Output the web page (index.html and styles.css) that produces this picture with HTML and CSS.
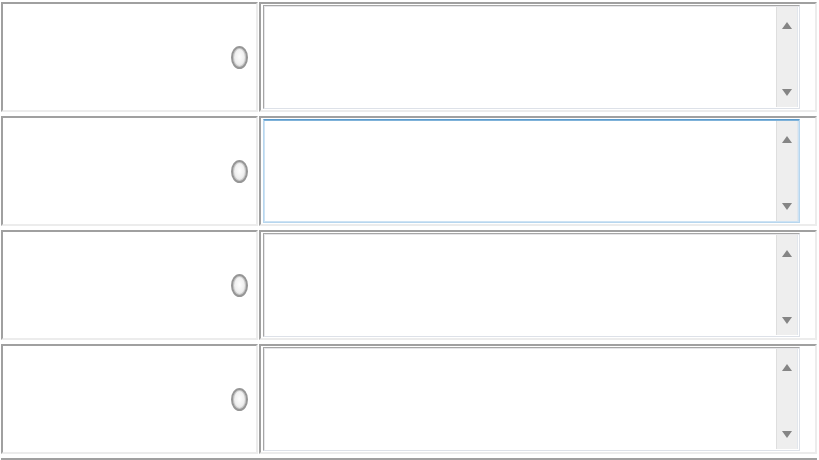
FILE: index.html
```html
<!DOCTYPE html>
<html lang="en">
<head>
    <meta charset="UTF-8">
    <meta name="viewport" content="width=device-width, initial-scale=1.0">
    <title>选项</title>
    <link rel="stylesheet" href="styles.css">
</head>
<body>
    <div class="list">
        <div class="row">
            <div class="cell cell-choice"><input type="radio" name="pick" class="pick"></div>
            <div class="cell cell-field">
                <div class="field">
                    <textarea class="text"></textarea>
                    <div class="scroll">
                        <svg class="arrow" width="10" height="7" viewBox="0 0 10 7"><polygon points="5,0 10,7 0,7"/></svg>
                        <svg class="arrow" width="10" height="7" viewBox="0 0 10 7"><polygon points="0,0 10,0 5,7"/></svg>
                    </div>
                </div>
            </div>
        </div>
        <div class="row">
            <div class="cell cell-choice"><input type="radio" name="pick" class="pick"></div>
            <div class="cell cell-field">
                <div class="field is-focus">
                    <textarea class="text"></textarea>
                    <div class="scroll">
                        <svg class="arrow" width="10" height="7" viewBox="0 0 10 7"><polygon points="5,0 10,7 0,7"/></svg>
                        <svg class="arrow" width="10" height="7" viewBox="0 0 10 7"><polygon points="0,0 10,0 5,7"/></svg>
                    </div>
                </div>
            </div>
        </div>
        <div class="row">
            <div class="cell cell-choice"><input type="radio" name="pick" class="pick"></div>
            <div class="cell cell-field">
                <div class="field">
                    <textarea class="text"></textarea>
                    <div class="scroll">
                        <svg class="arrow" width="10" height="7" viewBox="0 0 10 7"><polygon points="5,0 10,7 0,7"/></svg>
                        <svg class="arrow" width="10" height="7" viewBox="0 0 10 7"><polygon points="0,0 10,0 5,7"/></svg>
                    </div>
                </div>
            </div>
        </div>
        <div class="row">
            <div class="cell cell-choice"><input type="radio" name="pick" class="pick"></div>
            <div class="cell cell-field">
                <div class="field">
                    <textarea class="text"></textarea>
                    <div class="scroll">
                        <svg class="arrow" width="10" height="7" viewBox="0 0 10 7"><polygon points="5,0 10,7 0,7"/></svg>
                        <svg class="arrow" width="10" height="7" viewBox="0 0 10 7"><polygon points="0,0 10,0 5,7"/></svg>
                    </div>
                </div>
            </div>
        </div>
        <div class="row row-edge"></div>
    </div>
</body>
</html>
```

FILE: styles.css
```css
* {
    margin: 0;
    padding: 0;
    box-sizing: border-box;
}
body {
    background-color: #fff;
    font-family: "Liberation Sans", Arial, sans-serif;
}
.list {
    display: flex;
    flex-direction: column;
    gap: 4px;
    padding: 2px 0 0 1px;
}
.row {
    display: grid;
    grid-template-columns: 257px 558px;
    column-gap: 1px;
    height: 110px;
    flex-shrink: 0;
}
.row-edge {
    height: 2px;
    width: 816px;
    background-color: #a0a0a0;
}
.cell {
    border: 2px solid;
    border-color: #a0a0a0 #ececec #ececec #a0a0a0;
    background-color: #fff;
}
.cell-choice {
    display: flex;
    align-items: center;
    justify-content: flex-end;
    padding-right: 8px;
}
.pick {
    appearance: none;
    -webkit-appearance: none;
    width: 17px;
    height: 23px;
    border-radius: 50%;
    border: 2px solid #969696;
    background: radial-gradient(ellipse at 50% 45%, #fefefe 0, #f1f1f1 45%, #d0d0d0 100%);
    box-shadow: inset 0 0 0 1px #c6c6c6;
}
.cell-field {
    padding: 1px 0 0 2px;
}
.field {
    display: flex;
    width: 537px;
    height: 104px;
    border: 1px solid;
    border-color: #a6a6a6 #dde1e8 #dde1e8 #a6a6a6;
    box-shadow: inset 1px 1px 0 #e6e6e9;
    padding: 1px;
    background-color: #fff;
}
.field.is-focus {
    border-color: #5c9bcc #b7d6ee #b7d6ee #b7d6ee;
    box-shadow: inset 0 1px 0 #7fb2d9, inset 1px 0 0 #cde2f3, inset -1px 0 0 #cde2f3, inset 0 -1px 0 #cde2f3;
}
.text {
    flex: 1;
    border: none;
    outline: none;
    resize: none;
    background: transparent;
}
.scroll {
    width: 22px;
    display: flex;
    flex-direction: column;
    justify-content: space-between;
    align-items: center;
    padding: 15px 0 11px;
    background-color: #eeeeee;
    border-left: 1px solid #dedede;
    border-right: 1px solid #e2e6ec;
}
.arrow polygon {
    fill: #858585;
}
```
